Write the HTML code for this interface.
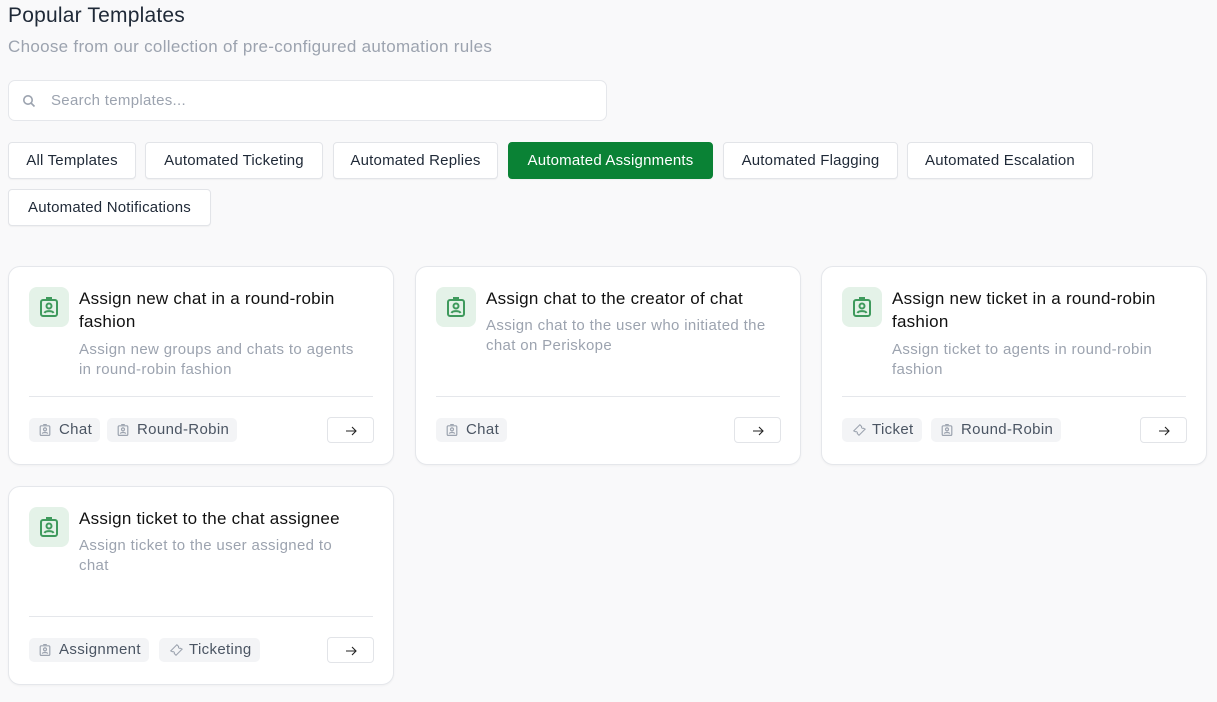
<!DOCTYPE html>
<html><head><style>
*{box-sizing:border-box;margin:0;padding:0}
body{width:1217px;height:702px;background:#f9f9fa;font-family:"Liberation Sans",sans-serif;color:#111827;position:relative;overflow:hidden}
.abs{position:absolute}
h1{position:absolute;left:8px;top:4px;font-size:21px;font-weight:400;color:#1f2937;letter-spacing:.2px}
.sub{left:8px;top:37px;font-size:17px;color:#9ca3af;letter-spacing:.3px}
.search{left:8px;top:80px;width:599px;height:41px;background:#fff;border:1px solid #e5e7eb;border-radius:7px}
.search span{position:absolute;left:42px;top:11px;font-size:15px;color:#9ca3af;letter-spacing:.3px}
.btn{position:absolute;height:37px;background:#fff;border:1px solid #e2e4e8;border-radius:4px;font-size:15px;color:#1f2937;line-height:35px;text-align:center;letter-spacing:.2px;box-shadow:0 1px 1px rgba(0,0,0,.04)}
.btn.on{background:#0a8235;border-color:#0a8235;color:#fff}
.card{position:absolute;width:386px;height:199px;background:#fff;border:1px solid #e5e7eb;border-radius:12px;box-shadow:0 1px 2px rgba(0,0,0,.04)}
.ic{position:absolute;left:20px;top:20px;width:40px;height:40px;border-radius:8px;background:#e4f2e8}
.ic svg{position:absolute;left:10px;top:9px}
.t{position:absolute;left:70px;top:20px;width:300px;font-size:17px;line-height:23px;color:#111;letter-spacing:.25px}
.d{position:absolute;left:70px;width:292px;font-size:15px;line-height:20px;color:#9ca3af;letter-spacing:.35px}
.hr{position:absolute;left:20px;right:20px;top:129px;border-top:1px solid #e5e7eb}
.tag{position:absolute;top:151px;height:24px;background:#f3f4f6;border-radius:5px;font-size:15px;line-height:24px;color:#4b5563;padding-left:30px;padding-right:8px;letter-spacing:.35px}
.tag svg{position:absolute;left:10px;top:5px}
.arr{position:absolute;left:318px;top:150px;width:47px;height:26px;border:1px solid #e2e4e8;border-radius:4px;background:#fff}
.arr svg{position:absolute;left:16px;top:6px}
</style></head><body>
<h1>Popular Templates</h1>
<div class="abs sub">Choose from our collection of pre-configured automation rules</div>
<div class="abs search"><svg class="abs" style="left:13px;top:13px" width="14" height="14" viewBox="0 0 14 14" fill="none" stroke="#9ca3af" stroke-width="1.6"><circle cx="6" cy="6" r="4.2"/><path d="M9 9l3.5 3.5"/></svg><span>Search templates...</span></div>
<div class="btn" style="left:8px;top:142px;width:128px">All Templates</div>
<div class="btn" style="left:145px;top:142px;width:178px">Automated Ticketing</div>
<div class="btn" style="left:333px;top:142px;width:165px">Automated Replies</div>
<div class="btn on" style="left:508px;top:142px;width:205px">Automated Assignments</div>
<div class="btn" style="left:723px;top:142px;width:175px">Automated Flagging</div>
<div class="btn" style="left:907px;top:142px;width:186px">Automated Escalation</div>
<div class="btn" style="left:8px;top:189px;width:203px">Automated Notifications</div>

<svg width="0" height="0" style="position:absolute"><defs>
<symbol id="badge" viewBox="0 0 20 22"><g fill="none" stroke="#3f9a5d" stroke-width="2"><rect x="2" y="4" width="16" height="16" rx="2"/><path d="M7 2h6"/><circle cx="10" cy="10" r="2.5"/><path d="M5.5 17c1-2.5 8-2.5 9 0"/></g></symbol>
<symbol id="badg" viewBox="0 0 20 22"><g fill="none" stroke="#9ca3af" stroke-width="2"><rect x="2" y="4" width="16" height="16" rx="2"/><path d="M7 2h6"/><circle cx="10" cy="10" r="2.5"/><path d="M5.5 17c1-2.5 8-2.5 9 0"/></g></symbol>
<symbol id="tick" viewBox="0 0 16 16"><path d="M2 9l7-7 2 2a1.5 1.5 0 0 0 2 2l2 1-7 7-2-2a1.5 1.5 0 0 0-2-2z" fill="none" stroke="#9ca3af" stroke-width="1.2"/></symbol>
<symbol id="ar" viewBox="0 0 14 14"><path d="M2 7h10M8 3l4 4-4 4" fill="none" stroke="#222" stroke-width="1.1"/></symbol>
</defs></svg>

<div class="card" style="left:8px;top:266px">
<div class="ic"><svg width="20" height="22"><use href="#badge"/></svg></div>
<div class="t">Assign new chat in a round-robin fashion</div>
<div class="d" style="top:73px;width:284px">Assign new groups and chats to agents in round-robin fashion</div>
<div class="hr"></div>
<div class="tag" style="left:20px"><svg width="12" height="14"><use href="#badg"/></svg>Chat</div>
<div class="tag" style="left:98px"><svg width="12" height="14"><use href="#badg"/></svg>Round-Robin</div>
<div class="arr"><svg width="14" height="14"><use href="#ar"/></svg></div>
</div>
<div class="card" style="left:415px;top:266px">
<div class="ic"><svg width="20" height="22"><use href="#badge"/></svg></div>
<div class="t">Assign chat to the creator of chat</div>
<div class="d" style="top:49px">Assign chat to the user who initiated the chat on Periskope</div>
<div class="hr"></div>
<div class="tag" style="left:20px"><svg width="12" height="14"><use href="#badg"/></svg>Chat</div>
<div class="arr"><svg width="14" height="14"><use href="#ar"/></svg></div>
</div>
<div class="card" style="left:821px;top:266px">
<div class="ic"><svg width="20" height="22"><use href="#badge"/></svg></div>
<div class="t">Assign new ticket in a round-robin fashion</div>
<div class="d" style="top:73px">Assign ticket to agents in round-robin fashion</div>
<div class="hr"></div>
<div class="tag" style="left:20px"><svg width="14" height="14"><use href="#tick"/></svg>Ticket</div>
<div class="tag" style="left:109px"><svg width="12" height="14"><use href="#badg"/></svg>Round-Robin</div>
<div class="arr"><svg width="14" height="14"><use href="#ar"/></svg></div>
</div>
<div class="card" style="left:8px;top:486px">
<div class="ic"><svg width="20" height="22"><use href="#badge"/></svg></div>
<div class="t">Assign ticket to the chat assignee</div>
<div class="d" style="top:49px;width:270px">Assign ticket to the user assigned to chat</div>
<div class="hr"></div>
<div class="tag" style="left:20px"><svg width="12" height="14"><use href="#badg"/></svg>Assignment</div>
<div class="tag" style="left:150px"><svg width="14" height="14"><use href="#tick"/></svg>Ticketing</div>
<div class="arr"><svg width="14" height="14"><use href="#ar"/></svg></div>
</div>
</body></html>
